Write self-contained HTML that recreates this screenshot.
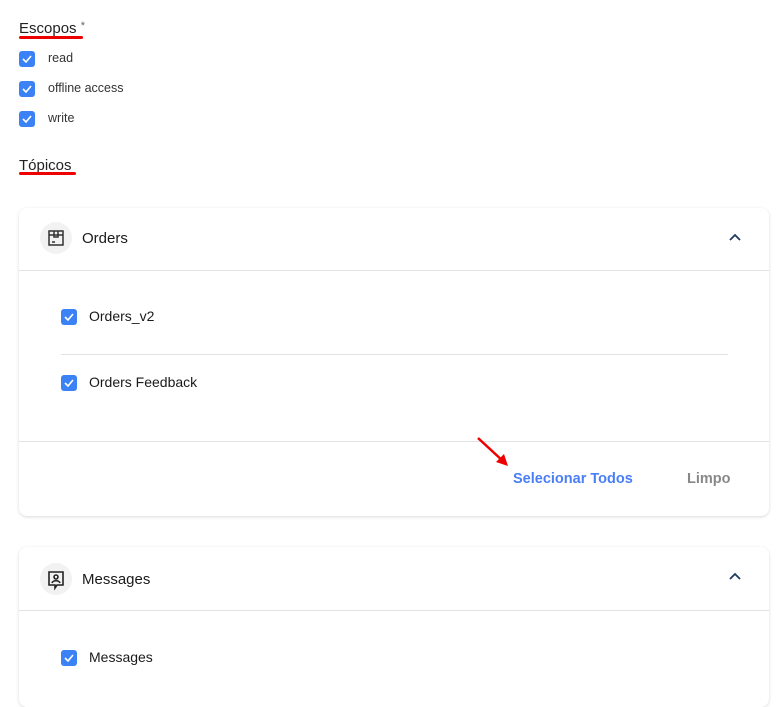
<!DOCTYPE html>
<html><head><meta charset="utf-8"><style>
*{margin:0;padding:0;box-sizing:border-box}
body{width:780px;height:678px;overflow:hidden;background:#fff;font-family:"Liberation Sans",sans-serif;color:#222;position:relative}
.a{position:absolute}
.cb{position:absolute;width:16px;height:16px;background:#3b82f6;border-radius:3px}
.cb svg{position:absolute;left:3px;top:4px}
.lbl{position:absolute;font-size:12.5px;color:#333}
.card{position:absolute;left:19px;width:750px;background:#fff;border-radius:8px;box-shadow:0 1px 3px rgba(0,0,0,.15)}
.hr{position:absolute;height:1px;background:#e3e3e3}
.ic{position:absolute;width:32px;height:32px;border-radius:50%;background:#f2f2f2}
.t{position:absolute;font-size:15px;color:#1a1a1a}
.it{position:absolute;font-size:14px;color:#1a1a1a}
</style></head><body>
<div class="a" style="left:19px;top:20px;font-size:15px;color:#222">Escopos <span style="font-size:11px;color:#666;vertical-align:top">*</span></div>
<div class="a" style="left:19px;top:36px;width:64px;height:3px;background:#e00;border-radius:2px"></div>
<div class="cb" style="left:19px;top:51px"><svg width="10" height="8"><path d="M1 4l3 3 5-6" stroke="#fff" stroke-width="1.6" fill="none"/></svg></div>
<div class="lbl" style="left:48px;top:51px">read</div>
<div class="cb" style="left:19px;top:81px"><svg width="10" height="8"><path d="M1 4l3 3 5-6" stroke="#fff" stroke-width="1.6" fill="none"/></svg></div>
<div class="lbl" style="left:48px;top:81px">offline access</div>
<div class="cb" style="left:19px;top:111px"><svg width="10" height="8"><path d="M1 4l3 3 5-6" stroke="#fff" stroke-width="1.6" fill="none"/></svg></div>
<div class="lbl" style="left:48px;top:111px">write</div>
<div class="a" style="left:19px;top:157px;font-size:15px;color:#222">Tópicos</div>
<div class="a" style="left:19px;top:172px;width:57px;height:3px;background:#e00;border-radius:2px"></div>

<div class="card" style="top:208px;height:308px">
 <div class="ic" style="left:21px;top:14px"><svg width="32" height="32"><g stroke="#333" stroke-width="1.5" fill="none"><rect x="9" y="9" width="14" height="14"/><path d="M9 13h14M14 9v6h4V9"/><path d="M12 20h3"/></g></svg></div>
 <div class="t" style="left:63px;top:22px">Orders</div>
 <svg class="a" style="left:709px;top:25px" width="14" height="10"><path d="M2 7l5-5 5 5" stroke="#1e3a5f" stroke-width="1.8" fill="none"/></svg>
 <div class="hr" style="left:0;top:62px;width:750px"></div>
 <div class="cb" style="left:42px;top:101px"><svg width="10" height="8"><path d="M1 4l3 3 5-6" stroke="#fff" stroke-width="1.6" fill="none"/></svg></div>
 <div class="it" style="left:70px;top:100px">Orders_v2</div>
 <div class="hr" style="left:42px;top:146px;width:667px"></div>
 <div class="cb" style="left:42px;top:167px"><svg width="10" height="8"><path d="M1 4l3 3 5-6" stroke="#fff" stroke-width="1.6" fill="none"/></svg></div>
 <div class="it" style="left:70px;top:166px">Orders Feedback</div>
 <div class="hr" style="left:0;top:233px;width:750px"></div>
 <div class="a" style="left:494px;top:263px;font-size:14.5px;font-weight:bold;color:#4a7ef5">Selecionar Todos</div>
 <div class="a" style="left:668px;top:263px;font-size:14.5px;font-weight:bold;color:#888">Limpo</div>
</div>
<svg class="a" style="left:476px;top:436px" width="36" height="32"><path d="M2 2L28 26" stroke="#e00" stroke-width="2.5"/><path d="M20 26L32 30 28 18z" fill="#e00"/></svg>

<div class="card" style="top:547px;height:160px">
 <div class="ic" style="left:21px;top:16px"><svg width="32" height="32"><g stroke="#222" stroke-width="1.6" fill="none"><path d="M9 9h14v13h-6l-2 3v-3H9z"/><circle cx="16" cy="14" r="2"/><path d="M12 20c1-3 7-3 8 0"/></g></svg></div>
 <div class="t" style="left:63px;top:24px">Messages</div>
 <svg class="a" style="left:709px;top:25px" width="14" height="10"><path d="M2 7l5-5 5 5" stroke="#1e3a5f" stroke-width="1.8" fill="none"/></svg>
 <div class="hr" style="left:0;top:63px;width:750px"></div>
 <div class="cb" style="left:42px;top:103px"><svg width="10" height="8"><path d="M1 4l3 3 5-6" stroke="#fff" stroke-width="1.6" fill="none"/></svg></div>
 <div class="it" style="left:70px;top:102px">Messages</div>
</div>
</body></html>
